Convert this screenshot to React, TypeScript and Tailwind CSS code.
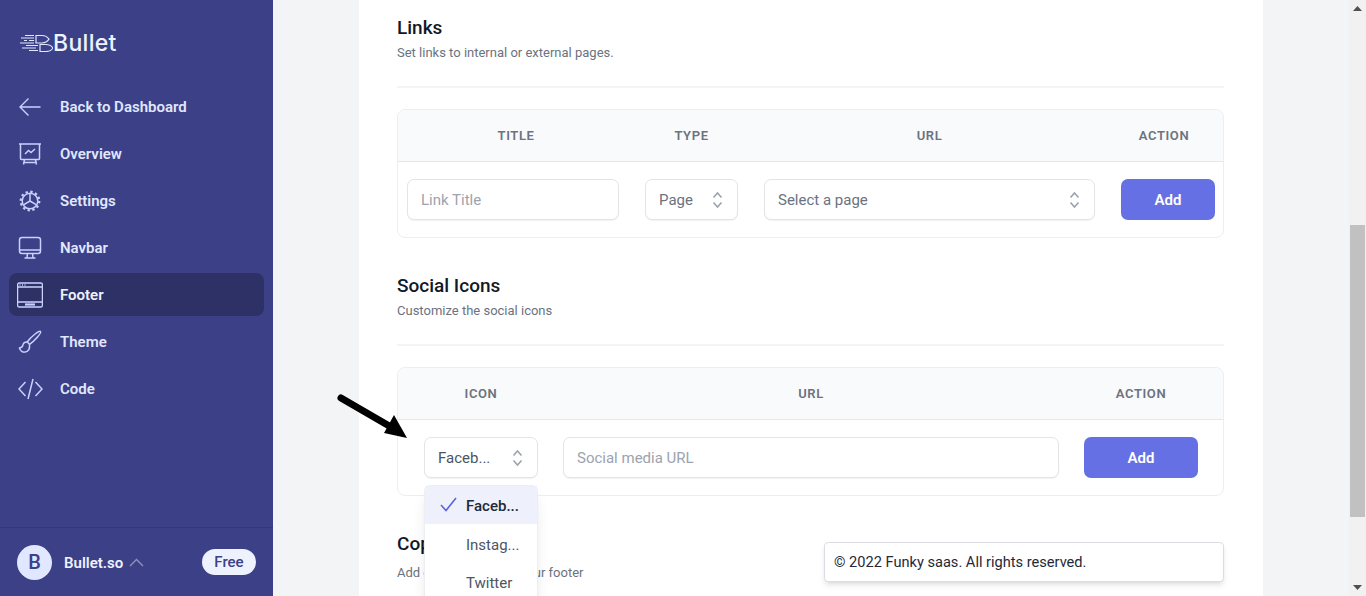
import { type ReactNode } from "react";

function BackIcon() {
    return (
        <svg width="24" height="20" viewBox="0 0 24 20" fill="none" stroke="currentColor" strokeWidth="1.4">
            <path d="M22.500 10H2M10.500 1.500L2 10l8.500 8.500" />
        </svg>
    );
}

function OverviewIcon() {
    return (
        <svg width="24" height="24" viewBox="0 0 24 24" fill="none" stroke="currentColor" strokeWidth="1.500">
            <path d="M1 2h22M2.500 2v14.500a1 1 0 0 0 1 1h17a1 1 0 0 0 1-1V2" />
            <path d="M7 12l3.500-3.500 2.500 2L17 7M6.500 17.500L5.500 22.500M17.500 17.500l1 5M5.500 20.500h13" />
        </svg>
    );
}

function SettingsIcon() {
    return (
        <svg width="24" height="24" viewBox="0 0 24 24" fill="none" stroke="currentColor" strokeWidth="1.500">
            <circle cx="12" cy="12" r="7.800" />
            <circle cx="12" cy="12" r="9.300" strokeWidth="2.200" strokeDasharray="2.400 2.470" />
            <path d="M12 12V4.500M12 12l6.500 3.800M12 12l-6.500 3.800" />
        </svg>
    );
}

function NavbarIcon() {
    return (
        <svg width="24" height="24" viewBox="0 0 24 24" fill="none" stroke="currentColor" strokeWidth="1.500">
            <rect x="1.500" y="1.500" width="21" height="16" rx="2.500" />
            <path d="M1.500 14h21M9.500 17.500l-.5 4M14.500 17.500l.5 4M6.500 22h11" />
        </svg>
    );
}

function FooterIcon() {
    return (
        <svg width="26" height="26" viewBox="0 0 26 26" fill="none" stroke="currentColor" strokeWidth="1.300">
            <rect x="0.600" y="1" width="24.800" height="24" rx="1.500" />
            <path d="M1 5h24M1 20h24" />
            <path d="M2.500 3h1M5 3h1M7.500 3h1" />
            <path d="M8 22.500h10" strokeWidth="2.200" />
        </svg>
    );
}

function ThemeIcon() {
    return (
        <svg width="24" height="24" viewBox="0 0 24 24" fill="none" stroke="currentColor" strokeWidth="1.500">
            <path d="M22.500 1.500c1.200 1.200-5.500 9-11 12.800L9.200 12C13 6.500 21.300.3 22.500 1.500z" />
            <path d="M9.200 12c-2.500-.2-4 1.300-4.400 3.300-.3 1.500-1.300 2.300-3.300 2.700.7 3 3.300 4.500 5.800 4 3-.6 4.700-3.200 4.200-7.700" />
        </svg>
    );
}

function CodeIcon() {
    return (
        <svg width="25" height="22" viewBox="0 0 25 22" fill="none" stroke="currentColor" strokeWidth="1.500">
            <path d="M7.500 4L1 11l6.500 7M17.500 4L24 11l-6.500 7M15 1L10 21" />
        </svg>
    );
}

function BulletLogo() {
    return (
        <svg width="34" height="18" viewBox="0 0 34 18" fill="none" stroke="#e0e7ff" strokeWidth="1.200">
            <path d="M17 1.500h6c3 0 5.500 1.500 7 3.700-1.500 2.300-4 3.800-7 3.800h-6z" />
            <path d="M21 10.500h6c3 0 5.500 1.500 7 3.500-1.500 2.500-4 3.500-7 3.500h-6z" />
            <path d="M6 1.500h9M2 4h13M5 6.500h3M10 6.500h5M1 9h14M7 11.500h12M3 14h14M10 16.500h9" />
        </svg>
    );
}

function UpDown() {
    return (
        <svg width="11" height="18" viewBox="0 0 11 18" fill="none" stroke="#9ca3af" strokeWidth="1.600">
            <path d="M1.500 6.500L5.500 2l4 4.500M1.500 11.500l4 4.500 4-4.500" />
        </svg>
    );
}

function NavItem({ icon, label, active }: { icon: ReactNode; label: string; active?: boolean }) {
    return (
        <div
            className={
                active
                    ? "flex items-center h-[43px] px-[8px] rounded-lg bg-[#2e3166] text-[#eef2ff]"
                    : "flex items-center h-[43px] px-[8px] rounded-lg text-[#e0e7ff]"
            }
        >
            <div className="w-[26px] flex justify-center text-[#c7d2fe] shrink-0">{icon}</div>
            <span className="ml-[17px] pt-[2px] text-[15px] font-semibold">{label}</span>
        </div>
    );
}

function Sidebar() {
    return (
        <aside className="w-[273px] h-full shrink-0 bg-[#3c4086] flex flex-col">
            <div className="h-[85px] pl-[19px] flex items-center">
                <BulletLogo />
                <span className="pt-[1px] text-[23px] font-medium tracking-[0.300px] text-[#eef2ff] font-['Inter',sans-serif]">
                    Bullet
                </span>
            </div>
            <nav className="flex flex-col gap-[4px] px-[9px] flex-1">
                <NavItem icon={<BackIcon />} label="Back to Dashboard" />
                <NavItem icon={<OverviewIcon />} label="Overview" />
                <NavItem icon={<SettingsIcon />} label="Settings" />
                <NavItem icon={<NavbarIcon />} label="Navbar" />
                <NavItem icon={<FooterIcon />} label="Footer" active />
                <NavItem icon={<ThemeIcon />} label="Theme" />
                <NavItem icon={<CodeIcon />} label="Code" />
            </nav>
            <div className="h-[69px] border-t border-[#343776] px-[17px] flex items-center">
                <div className="w-[35px] h-[35px] rounded-full bg-[#e0e7ff] text-[#3c4086] flex items-center justify-center text-[20px] font-medium">
                    B
                </div>
                <span className="ml-[12px] pt-[2px] text-[15px] font-semibold text-[#eef2ff]">Bullet.so</span>
                <svg className="ml-[6px]" width="15" height="9" viewBox="0 0 15 9" fill="none" stroke="#8f93b8" strokeWidth="1.400">
                    <path d="M1 8l6.500-6.500L14 8" />
                </svg>
                <span className="ml-auto w-[54px] h-[26px] rounded-full bg-[#eef2ff] text-[#3c4086] text-[15px] font-medium flex items-center justify-center">
                    Free
                </span>
            </div>
        </aside>
    );
}

function Select({ label, className }: { label: string; className: string }) {
    return (
        <div
            className={
                "h-[41px] rounded-[7px] border border-[#e3e4e8] shadow-[0_1px_1px_rgba(0,0,0,0.05)] bg-white pl-[13px] pr-[14px] flex items-center justify-between text-[15px] " +
                className
            }
        >
            <span className="pt-[2px]">{label}</span>
            <UpDown />
        </div>
    );
}

function TextInput({ placeholder }: { placeholder: string }) {
    return (
        <div className="h-[41px] rounded-[7px] border border-[#e3e4e8] shadow-[0_1px_1px_rgba(0,0,0,0.05)] bg-white pl-[13px] pt-[2px] flex items-center text-[15px] text-[#9ca3af]">
            {placeholder}
        </div>
    );
}

function AddButton() {
    return (
        <button className="h-[41px] rounded-[7px] bg-[#6570e4] text-white text-[15px] font-semibold pt-[2px]">
            Add
        </button>
    );
}

function SectionHead({ title, sub, subClass }: { title: string; sub: string; subClass?: string }) {
    return (
        <div>
            <h2 className="text-[19px] leading-[28px] font-medium text-[#111827]">{title}</h2>
            <p className={"text-[13px] leading-[20px] text-[#6b7280] " + (subClass ?? "mt-[1px]")}>{sub}</p>
        </div>
    );
}

function HeadCell({ children, className }: { children: string; className?: string }) {
    return (
        <div className={"pt-[1px] text-center text-[13px] font-semibold tracking-[0.600px] text-[#6b7280] " + (className ?? "")}>
            {children}
        </div>
    );
}

function IconDropdown() {
    return (
        <div className="absolute left-0 top-[48px] w-[114px] h-[130px] bg-white border border-[#eceef1] rounded-md shadow-lg text-[15px] text-[#4b5563] z-10">
            <div className="h-[38px] pt-[3px] bg-[#eef0fb] flex items-center font-medium text-[#1f2937] relative pl-[41px]">
                <svg className="absolute left-[15px] top-[11px]" width="17" height="15" viewBox="0 0 17 15" fill="none" stroke="#5b64d8" strokeWidth="1.600">
                    <path d="M1 8l5 5.500L16 1" />
                </svg>
                Faceb...
            </div>
            <div className="h-[39px] pt-[3px] flex items-center pl-[41px]">Instag...</div>
            <div className="h-[38px] pt-[3px] flex items-center pl-[41px]">Twitter</div>
        </div>
    );
}

function PointerArrow() {
    return (
        <svg className="absolute left-[-87px] top-[-43px]" width="74" height="48" viewBox="0 0 74 48" fill="none">
            <path d="M4 4L54 33" stroke="#000" strokeWidth="7" strokeLinecap="round" />
            <path d="M47 39L70 44L57 21z" fill="#000" />
        </svg>
    );
}

function Content() {
    return (
        <main className="flex-1 h-full min-w-0 bg-[#f3f4f6] flex justify-center">
            <div className="w-[904px] h-full bg-white pl-[38px] pr-[39px] pt-[14px]">
                <SectionHead title="Links" sub="Set links to internal or external pages." />
                <hr className="mt-[23px] border-t-2 border-[#f3f4f6]" />
                <div className="mt-[21px] border border-[#eceef1] rounded-lg">
                    <div className="h-[52px] bg-[#f9fafb] rounded-t-lg border-b border-[#e5e7eb] px-[9px] grid grid-cols-[212px_93px_331px_94px] gap-x-[26px] items-center">
                        <HeadCell className="pl-[6px]">TITLE</HeadCell>
                        <HeadCell>TYPE</HeadCell>
                        <HeadCell>URL</HeadCell>
                        <HeadCell className="pr-[8px]">ACTION</HeadCell>
                    </div>
                    <div className="h-[75px] px-[9px] grid grid-cols-[212px_93px_331px_94px] gap-x-[26px] items-center">
                        <TextInput placeholder="Link Title" />
                        <Select label="Page" className="text-[#6b7280]" />
                        <Select label="Select a page" className="text-[#6b7280]" />
                        <AddButton />
                    </div>
                </div>

                <div className="mt-[34px]">
                    <SectionHead title="Social Icons" sub="Customize the social icons" />
                </div>
                <hr className="mt-[23px] border-t-2 border-[#f3f4f6]" />
                <div className="mt-[21px] border border-[#eceef1] rounded-lg">
                    <div className="h-[52px] bg-[#f9fafb] rounded-t-lg border-b border-[#e5e7eb] pl-[26px] pr-[25px] grid grid-cols-[114px_496px_114px] gap-x-[25px] items-center">
                        <HeadCell>ICON</HeadCell>
                        <HeadCell>URL</HeadCell>
                        <HeadCell>ACTION</HeadCell>
                    </div>
                    <div className="h-[75px] pl-[26px] pr-[25px] grid grid-cols-[114px_496px_114px] gap-x-[25px] items-center">
                        <div className="relative">
                            <Select label="Faceb..." className="text-[#4b5563]" />
                            <PointerArrow />
                            <IconDropdown />
                        </div>
                        <TextInput placeholder="Social media URL" />
                        <AddButton />
                    </div>
                </div>

                <div className="mt-[34px] flex justify-between">
                    <SectionHead title="Copyright" sub="Add copyright text to your footer" subClass="mt-[5px]" />
                    <div className="mt-[12px] w-[400px] h-[40px] rounded-[4px] border border-[#dcdde3] shadow-md bg-white pl-[9px] pt-[2px] flex items-center text-[14.600px] text-[#1f2937]">
                        © 2022 Funky saas. All rights reserved.
                    </div>
                </div>
            </div>
        </main>
    );
}

function Scrollbar() {
    return (
        <div className="w-[17px] h-full shrink-0 bg-[#f1f1f1] flex flex-col items-center justify-between">
            <div className="w-full flex flex-col items-center">
                <div className="h-[17px] flex items-center justify-center">
                    <svg width="9" height="5" viewBox="0 0 9 5"><path d="M4.500 0L9 5H0z" fill="#505050" /></svg>
                </div>
                <div className="mt-[208px] w-[15px] h-[292px] bg-[#c1c1c1]" />
            </div>
            <div className="h-[17px] flex items-center justify-center">
                <svg width="9" height="5" viewBox="0 0 9 5"><path d="M0 0h9L4.500 5z" fill="#505050" /></svg>
            </div>
        </div>
    );
}

export default function App() {
    return (
        <div className="flex w-full h-[596px] overflow-hidden font-['Roboto',sans-serif]">
            <Sidebar />
            <Content />
            <Scrollbar />
        </div>
    );
}
